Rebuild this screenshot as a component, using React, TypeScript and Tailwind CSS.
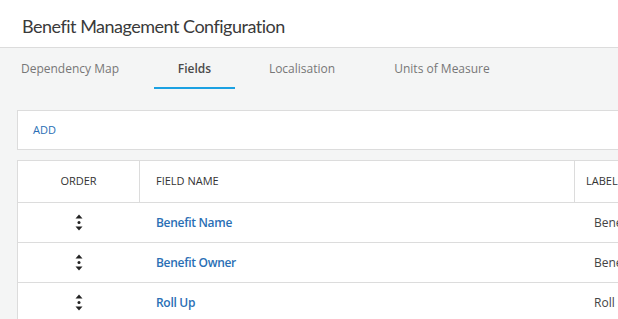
import React from 'react'

const tabs = [
  { label: 'Dependency Map', w: 'w-[140px]' },
  { label: 'Fields', w: 'w-[81px] ml-[14px]' },
  { label: 'Localisation', w: 'w-[114px] ml-[10px]' },
  { label: 'Units of Measure', w: 'w-[142px] ml-[12px]' }
]

const rows = [
  { name: 'Benefit Name', label: 'Benefit Name' },
  { name: 'Benefit Owner', label: 'Benefit Owner' },
  { name: 'Roll Up', label: 'Roll Up' }
]

function OrderIcon() {
  return (
    <svg width="8" height="17" viewBox="0 0 8 17" className="text-[#222]">
      <path d="M4 0.5 L7.5 4.5 H0.5 Z" fill="currentColor" />
      <circle cx="4" cy="8.5" r="1.5" fill="currentColor" />
      <path d="M0.5 12.5 H7.5 L4 16.5 Z" fill="currentColor" />
    </svg>
  )
}

export default function App() {
  return (
    <div className="h-[319px] w-[618px] overflow-hidden bg-[#f4f5f5] font-['Open_Sans',sans-serif]">
      <div className="h-[48px] border-b border-[#dcdcdc] bg-white pl-[22px] pt-[13px]">
        <h1 className="font-['Lato',sans-serif] text-[18px] leading-[26px] tracking-[-0.5px] text-[#3a3a3a]">
          Benefit Management Configuration
        </h1>
      </div>

      <div className="flex h-[41px] pt-[3px]">
        {tabs.map((t) => {
          const active = t.label === 'Fields'
          return (
            <div
              key={t.label}
              className={
                'flex shrink-0 items-center justify-center whitespace-nowrap border-b-2 text-[12px] ' +
                t.w +
                (active ? ' border-[#1ba1e2] font-semibold text-[#4a4a4a]' : ' border-transparent text-[#777]')
              }
            >
              {t.label}
            </div>
          )
        })}
      </div>

      <div className="pl-[17px] pt-[21px]">
        <div className="flex h-[40px] items-center border border-r-0 border-[#dcdcdc] bg-white pl-[15px] text-[11px] text-[#2a6fb5]">
          ADD
        </div>

        <div className="mt-[10px] border border-r-0 border-[#dcdcdc] bg-white">
          <div className="flex h-[41px] items-center text-[11px] text-[#333]">
            <div className="flex h-full w-[122px] shrink-0 items-center justify-center border-r border-[#dcdcdc]">
              ORDER
            </div>
            <div className="flex h-full w-[435px] shrink-0 items-center border-r border-[#dcdcdc] pl-[16px]">
              FIELD NAME
            </div>
            <div className="flex h-full flex-1 items-center whitespace-nowrap pl-[11px]">LABEL</div>
          </div>
          {rows.map((r) => (
            <div key={r.name} className="flex h-[40px] items-center border-t border-[#dcdcdc] text-[12px]">
              <div className="flex w-[122px] shrink-0 justify-center">
                <OrderIcon />
              </div>
              <div className="w-[435px] shrink-0 pl-[16px] font-semibold tracking-[-0.3px] text-[#2a6fb5]">
                {r.name}
              </div>
              <div className="flex-1 whitespace-nowrap pl-[19px] text-[#444]">{r.label}</div>
            </div>
          ))}
        </div>
      </div>
    </div>
  )
}
